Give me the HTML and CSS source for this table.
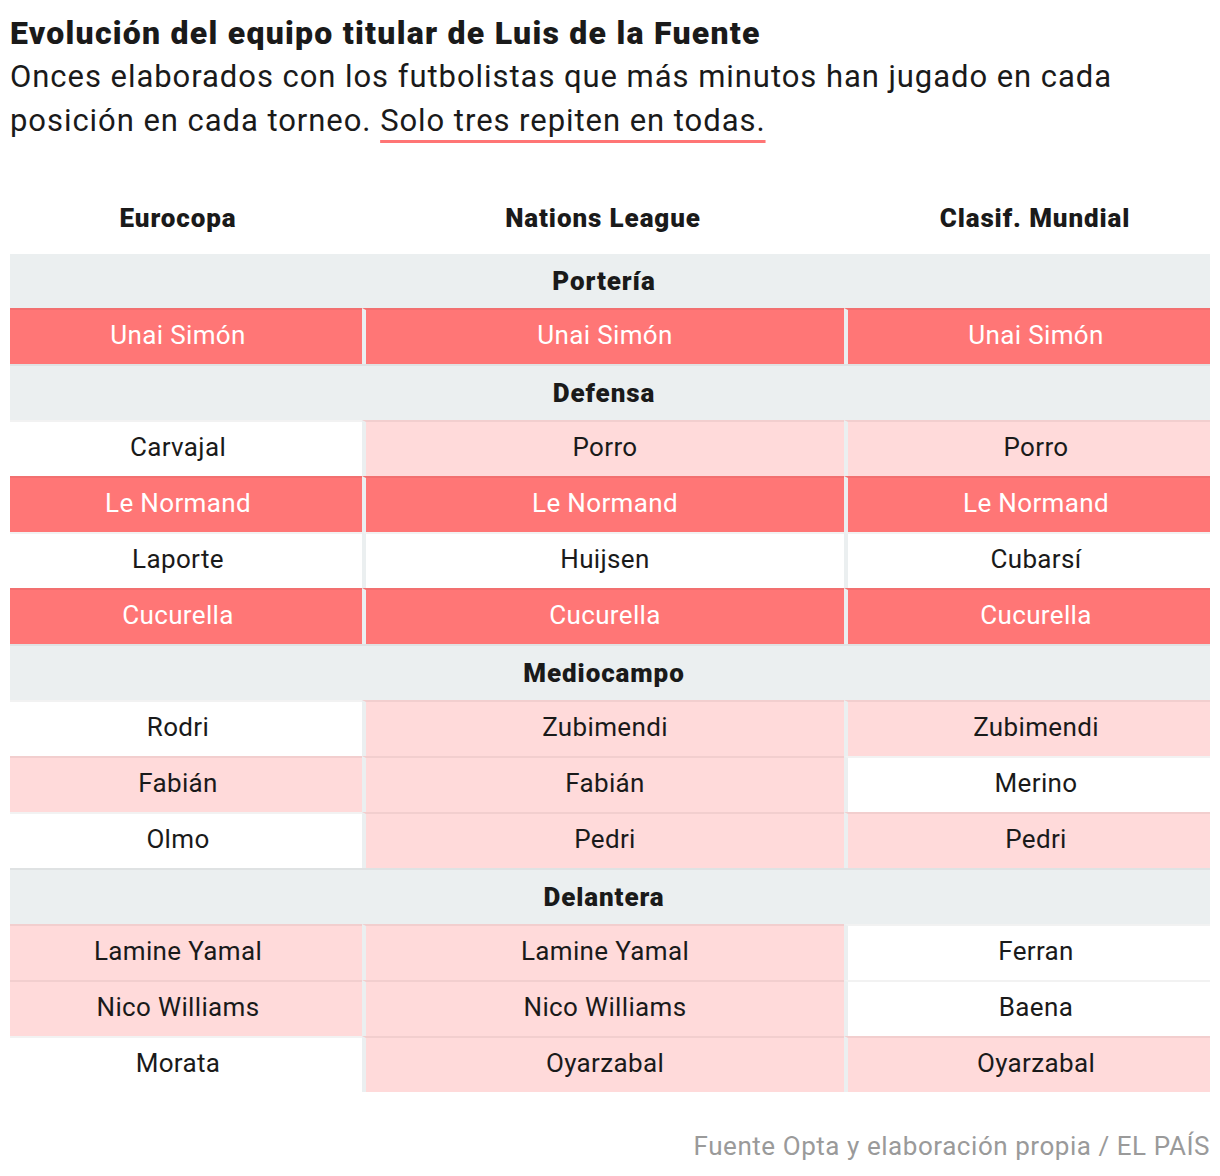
FILE: index.html
```html
<!DOCTYPE html>
<html lang="es">
<head>
<meta charset="utf-8">
<title>Evolución del equipo titular de Luis de la Fuente</title>
<link rel="stylesheet" href="styles.css">
</head>
<body>
<div class="chart">
  <h1 class="title">Evolución del equipo titular de Luis de la Fuente</h1>
  <p class="subtitle">Onces elaborados con los futbolistas que más minutos han jugado en cada posición en cada torneo. <span class="hl">Solo tres repiten en todas.</span></p>

  <div class="table">
    <div class="th c1">Eurocopa</div>
    <div class="th c2">Nations League</div>
    <div class="th c3">Clasif. Mundial</div>

    <div class="sec first">Portería</div>
    <div class="td c1 red">Unai Simón</div>
    <div class="td c2 red">Unai Simón</div>
    <div class="td c3 red">Unai Simón</div>

    <div class="sec">Defensa</div>
    <div class="td c1">Carvajal</div>
    <div class="td c2 pink">Porro</div>
    <div class="td c3 pink">Porro</div>
    <div class="td c1 red">Le Normand</div>
    <div class="td c2 red">Le Normand</div>
    <div class="td c3 red">Le Normand</div>
    <div class="td c1">Laporte</div>
    <div class="td c2">Huijsen</div>
    <div class="td c3">Cubarsí</div>
    <div class="td c1 red">Cucurella</div>
    <div class="td c2 red">Cucurella</div>
    <div class="td c3 red">Cucurella</div>

    <div class="sec">Mediocampo</div>
    <div class="td c1">Rodri</div>
    <div class="td c2 pink">Zubimendi</div>
    <div class="td c3 pink">Zubimendi</div>
    <div class="td c1 pink">Fabián</div>
    <div class="td c2 pink">Fabián</div>
    <div class="td c3">Merino</div>
    <div class="td c1">Olmo</div>
    <div class="td c2 pink">Pedri</div>
    <div class="td c3 pink">Pedri</div>

    <div class="sec">Delantera</div>
    <div class="td c1 pink">Lamine Yamal</div>
    <div class="td c2 pink">Lamine Yamal</div>
    <div class="td c3">Ferran</div>
    <div class="td c1 pink">Nico Williams</div>
    <div class="td c2 pink">Nico Williams</div>
    <div class="td c3">Baena</div>
    <div class="td c1">Morata</div>
    <div class="td c2 pink">Oyarzabal</div>
    <div class="td c3 pink">Oyarzabal</div>
  </div>

  <p class="source">Fuente Opta y elaboración propia / EL PAÍS</p>
</div>
</body>
</html>
```

FILE: styles.css
```css
html, body {
  margin: 0;
  padding: 0;
  background: #ffffff;
}

body {
  font-family: Roboto, "Liberation Sans", Arial, sans-serif;
  color: #1a1a1a;
}

.chart {
  width: 1200px;
  padding: 0 10px;
}

.title {
  margin: 0;
  padding-top: 15px;
  font-size: 32px;
  line-height: 36px;
  font-weight: 900;
  letter-spacing: 1.25px;
  color: #1a1a1a;
  white-space: nowrap;
}

.subtitle {
  margin: 4px 0 0 0;
  font-size: 31px;
  line-height: 44px;
  font-weight: 400;
  letter-spacing: 0.95px;
  color: #1a1a1a;
}

.hl {
  text-decoration: underline;
  text-decoration-color: #ff7575;
  text-decoration-thickness: 3px;
  text-underline-offset: 9px;
}

.table {
  display: grid;
  grid-template-columns: 352px 482px 366px;
  margin-top: 39px;
}

.th {
  height: 72px;
  display: flex;
  align-items: center;
  justify-content: center;
  font-size: 26px;
  font-weight: 900;
  letter-spacing: 0.9px;
  color: #1a1a1a;
}

.sec {
  grid-column: 1 / -1;
  height: 56px;
  box-sizing: border-box;
  border-top: 2px solid rgba(0, 0, 0, 0.05);
  background: #ebeff0;
  display: flex;
  align-items: center;
  justify-content: center;
  padding-right: 12px;
  font-size: 26px;
  font-weight: 900;
  letter-spacing: 0.9px;
  color: #1a1a1a;
}

.sec.first {
  height: 54px;
  border-top: none;
}

.td {
  height: 56px;
  box-sizing: border-box;
  border-top: 2px solid rgba(0, 0, 0, 0.05);
  padding-bottom: 5px;
  background: #ffffff;
  display: flex;
  align-items: center;
  justify-content: center;
  font-size: 26px;
  font-weight: 400;
  letter-spacing: 0.35px;
  color: #1a1a1a;
}

.c1 {
  padding-right: 16px;
}

.td.c2,
.td.c3 {
  border-left: 4px solid #ebeff0;
}

.th.c2 {
  padding-left: 0;
}

.th.c3 {
  padding-left: 16px;
}

.td.c3 {
  padding-left: 14px;
}

.td.red {
  background-color: #ff7676;
  color: #ffffff;
}

.td.pink {
  background-color: #ffdada;
}

.source {
  margin: 34px 0 0 0;
  text-align: right;
  font-size: 26px;
  line-height: 40px;
  letter-spacing: 0.55px;
  color: #9a9a9a;
}
```
